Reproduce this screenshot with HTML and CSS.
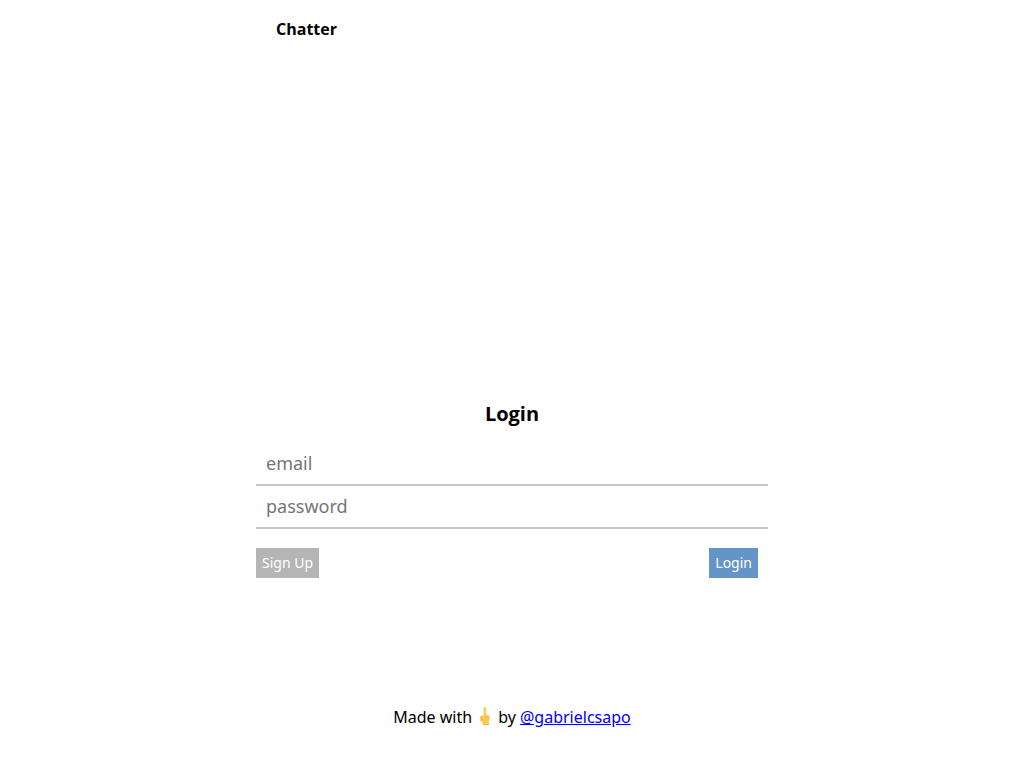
FILE: index.html
```html
<!DOCTYPE html>
<html lang="en">
<head>
<meta charset="utf-8">
<meta name="viewport" content="width=device-width, initial-scale=1">
<title>Chatter</title>
<link rel="stylesheet" href="styles.css">
</head>
<body class="page">
<header class="header"><h1 class="brand">Chatter</h1></header>
<main class="main">
<form class="login">
<h2 class="title">Login</h2>
<input class="field" type="email" placeholder="email" aria-label="email">
<input class="field" type="password" placeholder="password" aria-label="password">
<div class="actions">
<button class="button signup" type="button">Sign Up</button>
<button class="button submit" type="submit">Login</button>
</div>
</form>
</main>
<footer class="footer">
<span>Made with</span>
<svg class="hand" viewBox="0 0 16 20" aria-hidden="true"><path d="M6.600 9.500V2.400Q6.700 1 7.900 1T9.200 2.400V9L11 9.300 12.400 10.200Q13 10.800 12.900 12.500L12 16.500V19H5.800V17L3.300 15Q2.500 13.500 2.800 11.500Q3 10 4.700 9.600Z" fill="#fdcb55"/><path d="M4.800 10v3l2 1.500M9.200 9.500v3M11.200 10v2.500M6 18.500h6" fill="none" stroke="#f3ae3d" stroke-width=".7"/></svg>
<span>by <a class="link" href="#">@gabrielcsapo</a></span>
</footer>
</body>
</html>
```
FILE: styles.css
```css
* { box-sizing: border-box; }
.page { margin: 0; min-height: 100vh; display: flex; flex-direction: column; background: #fff; color: #000; font-family: "Noto Sans", "Open Sans", sans-serif; font-size: 16px; }
.header { width: 50%; margin: 0 auto; padding: 17px 20px; }
.brand { margin: 0; font-family: "Open Sans", sans-serif; font-size: 16px; line-height: 24px; }
.main { width: 50%; margin: auto auto 0; }
.login { display: flex; flex-direction: column; }
.title { margin: 0 0 15px; font-family: "Open Sans", sans-serif; font-size: 20px; line-height: 28px; text-align: center; }
.field { width: 100%; height: 43px; border: 0; border-bottom: 2px solid #c8c8c8; padding: 0 10px 2px; background: #fff; color: #000; font: 18px "Noto Sans", "Open Sans", sans-serif; }
.field::placeholder { color: #757575; opacity: 1; }
.actions { display: flex; justify-content: space-between; padding: 19px 10px 0 0; }
.button { height: 30px; border: 0; padding: 0 6px 2px; color: #fff; font: 14px "Noto Sans", "Open Sans", sans-serif; }
.signup { background: #b5b5b5; }
.submit { background: #6495c8; }
.footer { display: flex; justify-content: center; gap: 5px; padding: 127px 0 39px; line-height: 24px; }
.hand { width: 16px; height: 20px; margin-top: 1px; }
.link { color: #0000ee; }
```
